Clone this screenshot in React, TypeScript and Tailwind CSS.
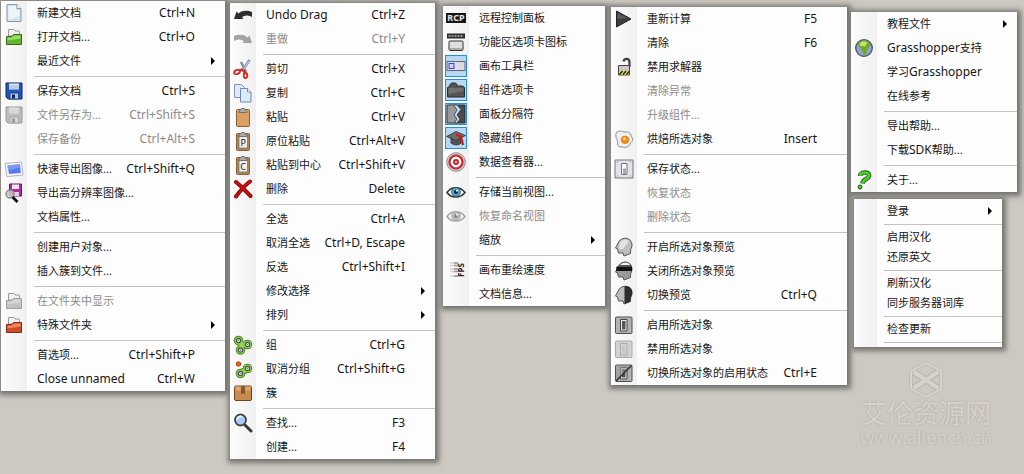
import { Fragment } from 'react';
import type { ReactNode } from 'react';
import clsx from 'clsx';

interface Item {
  label: string;
  keys?: string;
  icon?: ReactNode;
  disabled?: boolean;
  checked?: boolean;
  submenu?: boolean;
}

type Group = Item[];

/* ---------- icons ---------- */

function Icon({ children }: { children: ReactNode }) {
  return (
    <svg viewBox="0 0 20 20" className="size-5 shrink-0" fill="none" aria-hidden="true">
      {children}
    </svg>
  );
}

const NewIcon = () => (
  <Icon>
    <path d="M3 1.500h10l4 4v13H3z" fill="#d3e4f0" stroke="#8597ab" />
    <path d="M4.500 3h7.500v4h3.500v6L4.500 17z" fill="#edf5fa" />
    <path d="M13 1.500v4h4" fill="#fff" stroke="#8597ab" />
  </Icon>
);

const FolderIcon = ({ fill, light, stroke }: { fill: string; light: string; stroke: string }) => (
  <Icon>
    <path d="M4.500 9V2.500h5.500l1 1.500h4.500V9z" fill="#f1f1f1" stroke="#999" />
    <path d="M2.500 9.500h5l2-2h8v10h-15z" fill={fill} stroke={stroke} />
    <path d="M3.500 10.500h4.500l2-2h6.500v3l-13 2z" fill={light} />
  </Icon>
);

const SaveIcon = ({ body, edge, label }: { body: string; edge: string; label: string }) => (
  <Icon>
    <path d="M2 2h16v16H4l-2-2z" fill={body} stroke={edge} />
    <path d="M5 2.500h10v6H5z" fill={label} />
    <path d="M5 5h10M5 7h10" stroke={edge} strokeOpacity=".3" />
    <path d="M6 12h8.500v6H6z" fill={label} fillOpacity=".75" stroke={edge} strokeWidth=".7" />
    <path d="M8 13.500h3v4H8z" fill={edge} />
  </Icon>
);

const ImageIcon = () => (
  <Icon>
    <path d="M1 4.500 17.500 3l1.500 13-16 1.500z" fill="#fafafa" stroke="#b4b4bc" strokeLinejoin="round" />
    <path d="m3.500 6.500 12.500-1.200.8 8.700L5 15z" fill="#547bf0" />
    <path d="m3.500 6.500 12.500-1.200.2 3-12.200 3z" fill="#7b9af8" />
  </Icon>
);

const HiResIcon = () => (
  <Icon>
    <path d="M5.500 1h12v12h-11l-1-1z" fill="#a3319f" stroke="#6a1769" />
    <path d="M8 1.500h7V6H8z" fill="#f6e4f5" />
    <path d="M9 9h6v4H9z" fill="#e6cbe6" />
    <circle cx="6" cy="11" r="4" fill="#c9c9c9" fillOpacity=".85" stroke="#888" strokeWidth="1.400" />
    <path d="m8.500 14 5 5" stroke="#111" strokeWidth="2.800" />
  </Icon>
);

const UndoIcon = () => (
  <Icon>
    <path d="M1 14 3.500 6.500l2 2C9 5 15 5.500 19 7v5c-4-2-7-2-10 0l1.500 2z" fill="#2e2e2e" />
  </Icon>
);

const RedoIcon = () => (
  <Icon>
    <path d="m19 14-2.500-7.500-2 2C11 5 5 5.500 1 7v5c4-2 7-2 10 0l-1.500 2z" fill="#a3a3a3" />
  </Icon>
);

const CutIcon = () => (
  <Icon>
    <path d="M16.500 1 9 12.500M8 3l5 10" stroke="#7f8fa8" strokeWidth="2.600" />
    <path d="M16 2 9.500 12" stroke="#d4dce8" />
    <path d="m10 10-4 2M10.500 11l2 4" stroke="#c9281c" strokeWidth="2.500" />
    <ellipse cx="4" cy="13" rx="3" ry="2" transform="rotate(-25 4 13)" stroke="#d22a1e" strokeWidth="1.800" />
    <ellipse cx="12.500" cy="16.500" rx="1.800" ry="2.500" stroke="#d22a1e" strokeWidth="1.800" />
  </Icon>
);

const CopyIcon = () => (
  <Icon>
    <path d="M1.500 1.500h7l3 3v10h-10z" fill="#dfeaf4" stroke="#8095b2" />
    <path d="M7.500 5.500h7l3.500 3.500v10H7.500z" fill="#dceaf5" stroke="#7189a8" />
    <path d="M14.500 5.500V9H18" fill="#fff" stroke="#7189a8" />
  </Icon>
);

const PasteIcon = ({ letter }: { letter?: string }) => (
  <Icon>
    <rect x="3.500" y="2.500" width="13" height="17" rx="1" fill={letter ? '#b08454' : '#d9a05f'} stroke="#8a6135" />
    {letter && <path d="M6 5h8.500v12H6z" fill="#eee" stroke="#777" strokeWidth=".8" />}
    <path d="M6 5.500c0-3 2-2 2.500-4h3c.5 2 2.500 1 2.500 4z" fill="#aaa" stroke="#666" strokeWidth=".8" />
    {letter && (
      <text x="10.200" y="14.500" textAnchor="middle" fontSize="9" fill="#222">
        {letter}
      </text>
    )}
  </Icon>
);

const DeleteIcon = () => (
  <Icon>
    <path d="M3 3c5 4 9 8.500 14.500 14M17 2.500C11 7 7 12 3 17.500" stroke="#7c0404" strokeWidth="4" strokeLinecap="round" />
    <path d="M3 3c5 4 9 8.500 14.500 14M17 2.500C11 7 7 12 3 17.500" stroke="#c80f0f" strokeWidth="2.400" strokeLinecap="round" />
  </Icon>
);

const Ring = ({ x, y }: { x: number; y: number }) => (
  <>
    <circle cx={x} cy={y} r="2.200" fill="#eee" stroke="#4c4c55" strokeWidth="1.200" />
    <circle cx={x} cy={y} r=".8" fill="#777" />
  </>
);

// zero-length segments give the round lobes, the others the necks between them
const GroupIcon = () => (
  <Icon>
    <g strokeLinecap="round">
      <path d="M5.500 5.500h0M14.500 9.500h0M7.500 15h0" stroke="#4b8a1c" strokeWidth="9.600" />
      <path d="M5.500 5.500 9 10l5.500-.5M9 10l-1.500 5" stroke="#4b8a1c" strokeWidth="6.500" />
      <path d="M5.500 5.500h0M14.500 9.500h0M7.500 15h0" stroke="#8fd84c" strokeWidth="7.600" />
      <path d="M5.500 5.500 9 10l5.500-.5M9 10l-1.500 5" stroke="#8fd84c" strokeWidth="4.500" />
    </g>
    <Ring x={5.5} y={5.5} />
    <Ring x={14.5} y={9.5} />
    <Ring x={7.5} y={15} />
  </Icon>
);

const UngroupIcon = () => (
  <Icon>
    <g strokeLinecap="round">
      <path d="M14.500 9.500h0M7.500 14.500h0" stroke="#4b8a1c" strokeWidth="9.600" />
      <path d="m7.500 14.500 7-5" stroke="#4b8a1c" strokeWidth="6.500" />
      <path d="M14.500 9.500h0M7.500 14.500h0" stroke="#8fd84c" strokeWidth="7.600" />
      <path d="m7.500 14.500 7-5" stroke="#8fd84c" strokeWidth="4.500" />
    </g>
    <Ring x={14.5} y={9.5} />
    <Ring x={7.5} y={14.5} />
    <circle cx="5.500" cy="5" r="2.200" fill="#f2641d" stroke="#b03a0c" />
  </Icon>
);

const ClusterIcon = () => (
  <Icon>
    <rect x="1.500" y="3" width="17" height="14.500" rx="1.500" fill="#c98c50" stroke="#6e4520" />
    <path d="M2.500 3.500h15v4h-15z" fill="#dba76e" />
    <path d="M8 3h4v8.500l-2-1.500-2 1.500z" fill="#8c5426" />
  </Icon>
);

const FindIcon = () => (
  <Icon>
    <path d="m12 12 6 6" stroke="#3a3a3a" strokeWidth="3" strokeLinecap="round" />
    <circle cx="7.500" cy="7" r="5.500" fill="#a9cdf1" stroke="#444" strokeWidth="1.800" />
    <path d="M4 7a3.500 3.500 0 0 1 5-3.200" stroke="#e9f5ff" strokeWidth="1.600" />
  </Icon>
);

const RcpIcon = () => (
  <Icon>
    <rect x="0" y="5" width="20" height="10" fill="#151515" />
    <text x="10" y="13.300" textAnchor="middle" fontSize="9" fontWeight="700" fill="#e4e4e4">
      RCP
    </text>
  </Icon>
);

const RibbonIcon = () => (
  <Icon>
    <path d="M1 1.500h18v5H1z" fill="#2c2c2c" />
    <path d="M2.500 4h15" stroke="#b5b5b5" strokeWidth="1.500" strokeDasharray="2 1" />
    <rect x="3" y="9" width="14" height="9.500" rx="1" fill="#dedede" stroke="#333" />
    <path d="M4 17h12.500" stroke="#777" />
  </Icon>
);

const ToolbarIcon = () => (
  <Icon>
    <rect x="1" y="5.500" width="18" height="9" fill="#e0e0e4" stroke="#64646c" />
    <rect x="3" y="7.500" width="5" height="5" fill="#c8d0ff" stroke="#3a4bd2" />
    <path d="M14 6v8M16.500 6v8" stroke="#cfcfd4" />
  </Icon>
);

const TabsIcon = () => (
  <Icon>
    <path d="M1.500 7.500 4 6V4.500L5.500 3h4L11 4.500V6h5.500l2 1.500V17h-17z" fill="#555" stroke="#2a2a2a" />
    <path d="M2.500 8h15v3l-15 3z" fill="#707070" />
  </Icon>
);

const DividerIcon = () => (
  <Icon>
    <path d="M1 1h18v18H1z" fill="#4a4a4a" stroke="#2b2b2b" />
    <path d="M1.500 1.500H8l3 5-3 5 3 4-3 3H1.500z" fill="#9a9a9a" />
    <path d="M7.500 1 11 6l-3 5 3 4-2.500 4h2.500l3-4-3-4 4-5.500L11 1z" fill="#b6dcf8" stroke="#333" strokeWidth=".7" />
  </Icon>
);

const CapIcon = () => (
  <Icon>
    <path d="M5 9v6c3 2.500 8 2.500 10 0V9z" fill="#555" stroke="#2d2d2d" strokeWidth=".8" />
    <path d="m.5 8.500 9.500-5 9.500 4-9.500 5z" fill="#6b6b6b" stroke="#333" strokeWidth=".8" />
    <path d="M10 7c3 0 5 1 5.500 3.500L17 17" stroke="#d8161b" strokeWidth="2.200" />
  </Icon>
);

const TargetIcon = () => (
  <Icon>
    <circle cx="10" cy="10" r="9.300" fill="#ccc" stroke="#777" strokeWidth=".8" />
    <circle cx="10" cy="10" r="6.500" fill="#fff" stroke="#d0222a" strokeWidth="2.200" />
    <circle cx="10" cy="10" r="3" fill="#d0222a" />
    <circle cx="10" cy="10" r=".9" fill="#fff" />
  </Icon>
);

const EyeIcon = ({ iris, line, pupil }: { iris: string; line: string; pupil: string }) => (
  <Icon>
    <path d="M1 10.500C5 4 14.500 4 19 10.500 14.500 16.500 5 16.500 1 10.500z" fill="#f4f4f4" stroke={line} strokeWidth="1.500" />
    <circle cx="10" cy="10" r="4.500" fill={iris} stroke={line} strokeWidth=".6" />
    <circle cx="10" cy="10" r="2" fill={pupil} />
    <circle cx="11" cy="8.800" r="1" fill="#fff" />
  </Icon>
);

const FpsIcon = () => (
  <Icon>
    <path d="M4 3h7M4 5.500h7M4 9h7M4 11.500h7M4 16h7" stroke="#d2d2d2" strokeWidth="1.600" />
    <path d="M8 3h4M8 5.500h4M8 9h4M8 11.500h4M8 16h4" stroke="#999" strokeWidth="1.600" />
    <text x="0" y="0" transform="translate(18 10) rotate(-90)" textAnchor="middle" fontSize="8" fontWeight="700" fill="#222">
      FPS
    </text>
  </Icon>
);

const PlayIcon = () => (
  <Icon>
    <path d="M2.500 2 17 10 2.500 18z" fill="#3d3d3d" stroke="#222" strokeLinejoin="round" />
    <path d="M3.500 4 14 9.500H3.500z" fill="#5b5b5b" />
  </Icon>
);

const LockIcon = () => (
  <Icon>
    <path d="M9.500 4.500C10 1 15.500 1 15.500 5v5" stroke="#444" strokeWidth="2.300" />
    <path d="M4.500 8.500h11v9.500h-11z" fill="#c9c9c9" stroke="#444" />
    <path d="M5 14h10v3.500H5z" fill="#f1da1b" />
    <path d="m5.500 17.500 3-3.500M9 17.500l3-3.500M12.500 17.500l2.500-3" stroke="#222" strokeWidth="1.400" />
  </Icon>
);

const EggIcon = () => (
  <Icon>
    <path d="M3 3c4-2 5-.5 8 0 4-.5 6 1 6 4 2.500 3 2 5-.5 7-1 4-5 5-8 4-4 .5-6-2-4.500-5C2.500 10 .5 6 3 3z" fill="#efefef" stroke="#8f8f8f" />
    <circle cx="11" cy="10.800" r="3.800" fill="#f58a12" stroke="#d4700a" strokeWidth=".6" />
    <circle cx="10.500" cy="9.700" r="1.500" fill="#ffe08a" />
  </Icon>
);

const StateIcon = () => (
  <Icon>
    <path d="M1 1h18v18H1z" fill="#e2e2ea" stroke="#77777c" />
    <path d="M7.500 4.500h5.500v11H7.500z" fill="#fafafa" stroke="#777" />
    <path d="M9 9.500h3v5.500H9z" fill="#aaa" />
    <path d="M3 3h1M16 3h1M3 17h1M16 17h1" stroke="#888" />
  </Icon>
);

const headPath = 'M5 4.500C8-.5 18 0 18 8c0 3-1.500 4-1.500 6v2.500L10 19l-1-3H4.500L3.500 12 1.500 11z';

const HeadIcon = ({ variant }: { variant: 'on' | 'off' | 'split' }) => (
  <Icon>
    <path d={headPath} fill={variant === 'off' ? '#9a9a9a' : '#bdbdbd'} stroke="#555" />
    {variant === 'on' && <path d="M6 5.500C8 2 13 1.500 15 4.500L9 12H5z" fill="#e2e2e2" />}
    {variant === 'off' && (
      <>
        <path d="M5 4.500C8 0 15 0 17 4.500z" fill="#f4f4f4" stroke="#555" />
        <path d="M2.500 5.500H18V10H2z" fill="#111" />
      </>
    )}
    {variant === 'split' && <path d="M10.500 1C18 1 19 6 18 9.500c-1 2-1.500 3-1.500 7L10.500 19z" fill="#2d2d2d" />}
  </Icon>
);

const SwitchIcon = ({ variant }: { variant: 'on' | 'off' | 'toggle' }) => {
  const dim = variant === 'off';
  return (
    <Icon>
      <rect x="1.500" y="2" width="16.500" height="16.500" rx="1" fill={dim ? '#d2d2d2' : '#b2b2b2'} stroke={dim ? '#aaa' : '#505050'} />
      <path d="M6.500 4.500H13V16H6.500z" fill={dim ? '#d9d9d9' : '#ededed'} stroke={dim ? '#aaa' : '#444'} />
      <path d="M8 6h3.500v8.500H8z" fill={dim ? '#c7c7c7' : '#555'} />
      {variant === 'toggle' && (
        <>
          <path d="M2 18V2.500h15.500z" fill="#999" fillOpacity=".6" />
          <path d="M2 18 17.500 2.500" stroke="#333" strokeWidth="1.600" />
        </>
      )}
    </Icon>
  );
};

const GlobeIcon = () => (
  <Icon>
    <circle cx="10" cy="10" r="8.300" fill="#8fa8c8" stroke="#3b4a70" strokeWidth="1.200" />
    <path d="M3.500 5.500c3-3.500 8.500-4 12-1l1.500 3-2 1.500-2 3-.5 3-2.500 3-1.500-4.500-2-3z" fill="#6fa823" />
    <path d="M5.500 5c2-2 6-2 8-.5L11 8.500 6.500 8z" fill="#c5e06b" />
  </Icon>
);

const HelpIcon = () => (
  <Icon>
    <path d="M6 6c0-4 9-5 9-.5 0 4-6 3-6.500 8" stroke="#1c5a10" strokeWidth="4.600" />
    <path d="M6 6c0-4 9-5 9-.5 0 4-6 3-6.500 8" stroke="#4fcf2b" strokeWidth="2.800" />
    <circle cx="6" cy="17" r="2" fill="#4fcf2b" stroke="#1c5a10" />
  </Icon>
);

/* ---------- menu data ---------- */

const fileMenu: Group[] = [
  [
    { label: '新建文档', keys: 'Ctrl+N', icon: <NewIcon /> },
    { label: '打开文档...', keys: 'Ctrl+O', icon: <FolderIcon fill="#66b52e" light="#98dc62" stroke="#35691a" /> },
    { label: '最近文件', submenu: true },
  ],
  [
    { label: '保存文档', keys: 'Ctrl+S', icon: <SaveIcon body="#1f57c0" edge="#10285c" label="#dce9f8" /> },
    { label: '文件另存为...', keys: 'Ctrl+Shift+S', disabled: true, icon: <SaveIcon body="#bdbdbd" edge="#969696" label="#e3e3e3" /> },
    { label: '保存备份', keys: 'Ctrl+Alt+S', disabled: true },
  ],
  [
    { label: '快速导出图像...', keys: 'Ctrl+Shift+Q', icon: <ImageIcon /> },
    { label: '导出高分辨率图像...', icon: <HiResIcon /> },
    { label: '文档属性...' },
  ],
  [{ label: '创建用户对象...' }, { label: '插入簇到文件...' }],
  [
    { label: '在文件夹中显示', disabled: true, icon: <FolderIcon fill="#c1c1c1" light="#d6d6d6" stroke="#a0a0a0" /> },
    { label: '特殊文件夹', submenu: true, icon: <FolderIcon fill="#d04a22" light="#ee8a62" stroke="#852a10" /> },
  ],
  [
    { label: '首选项...', keys: 'Ctrl+Shift+P' },
    { label: 'Close unnamed', keys: 'Ctrl+W' },
  ],
];

const editMenu: Group[] = [
  [
    { label: 'Undo Drag', keys: 'Ctrl+Z', icon: <UndoIcon /> },
    { label: '重做', keys: 'Ctrl+Y', disabled: true, icon: <RedoIcon /> },
  ],
  [
    { label: '剪切', keys: 'Ctrl+X', icon: <CutIcon /> },
    { label: '复制', keys: 'Ctrl+C', icon: <CopyIcon /> },
    { label: '粘贴', keys: 'Ctrl+V', icon: <PasteIcon /> },
    { label: '原位粘贴', keys: 'Ctrl+Alt+V', icon: <PasteIcon letter="P" /> },
    { label: '粘贴到中心', keys: 'Ctrl+Shift+V', icon: <PasteIcon letter="C" /> },
    { label: '删除', keys: 'Delete', icon: <DeleteIcon /> },
  ],
  [
    { label: '全选', keys: 'Ctrl+A' },
    { label: '取消全选', keys: 'Ctrl+D, Escape' },
    { label: '反选', keys: 'Ctrl+Shift+I' },
    { label: '修改选择', submenu: true },
    { label: '排列', submenu: true },
  ],
  [
    { label: '组', keys: 'Ctrl+G', icon: <GroupIcon /> },
    { label: '取消分组', keys: 'Ctrl+Shift+G', icon: <UngroupIcon /> },
    { label: '簇', icon: <ClusterIcon /> },
  ],
  [
    { label: '查找...', keys: 'F3', icon: <FindIcon /> },
    { label: '创建...', keys: 'F4' },
  ],
];

const viewMenu: Group[] = [
  [
    { label: '远程控制面板', icon: <RcpIcon /> },
    { label: '功能区选项卡图标', icon: <RibbonIcon /> },
    { label: '画布工具栏', checked: true, icon: <ToolbarIcon /> },
    { label: '组件选项卡', checked: true, icon: <TabsIcon /> },
    { label: '面板分隔符', checked: true, icon: <DividerIcon /> },
    { label: '隐藏组件', checked: true, icon: <CapIcon /> },
    { label: '数据查看器...', icon: <TargetIcon /> },
  ],
  [
    { label: '存储当前视图...', icon: <EyeIcon iris="#4fa9d8" line="#333" pupil="#123" /> },
    { label: '恢复命名视图', disabled: true, icon: <EyeIcon iris="#bbb" line="#a5a5a5" pupil="#8a8a8a" /> },
    { label: '缩放', submenu: true },
  ],
  [{ label: '画布重绘速度', icon: <FpsIcon /> }, { label: '文档信息...' }],
];

const solutionMenu: Group[] = [
  [
    { label: '重新计算', keys: 'F5', icon: <PlayIcon /> },
    { label: '清除', keys: 'F6' },
    { label: '禁用求解器', icon: <LockIcon /> },
    { label: '清除异常', disabled: true },
    { label: '升级组件...', disabled: true },
    { label: '烘焙所选对象', keys: 'Insert', icon: <EggIcon /> },
  ],
  [
    { label: '保存状态...', icon: <StateIcon /> },
    { label: '恢复状态', disabled: true },
    { label: '删除状态', disabled: true },
  ],
  [
    { label: '开启所选对象预览', icon: <HeadIcon variant="on" /> },
    { label: '关闭所选对象预览', icon: <HeadIcon variant="off" /> },
    { label: '切换预览', keys: 'Ctrl+Q', icon: <HeadIcon variant="split" /> },
  ],
  [
    { label: '启用所选对象', icon: <SwitchIcon variant="on" /> },
    { label: '禁用所选对象', icon: <SwitchIcon variant="off" /> },
    { label: '切换所选对象的启用状态', keys: 'Ctrl+E', icon: <SwitchIcon variant="toggle" /> },
  ],
];

const helpMenu: Group[] = [
  [
    { label: '教程文件', submenu: true },
    { label: 'Grasshopper支持', icon: <GlobeIcon /> },
    { label: '学习Grasshopper' },
    { label: '在线参考' },
  ],
  [{ label: '导出帮助...' }, { label: '下载SDK帮助...' }],
  [{ label: '关于...', icon: <HelpIcon /> }],
];

const localeMenu: Group[] = [
  [{ label: '登录', submenu: true }],
  [{ label: '启用汉化' }, { label: '还原英文' }],
  [{ label: '刷新汉化' }, { label: '同步服务器词库' }],
  [{ label: '检查更新' }],
];

/* ---------- menu ---------- */

// Latin runs are set one size up so they sit level with the Chinese glyphs
function Label({ text }: { text: string }) {
  return (
    <span className="pl-2.5 text-[11px] whitespace-nowrap">
      {text.split(/([A-Za-z][A-Za-z ]*)/).map((part, i) =>
        i % 2 ? <span key={i} className="text-xs leading-none">{part}</span> : part
      )}
    </span>
  );
}

function MenuItem({ item, compact }: { item: Item; compact?: boolean }) {
  return (
    <li role="none">
      <button
        role={item.checked ? 'menuitemcheckbox' : 'menuitem'}
        aria-checked={item.checked}
        aria-haspopup={item.submenu ? 'menu' : undefined}
        disabled={item.disabled}
        className={clsx(
          'flex w-full items-center text-left',
          compact ? 'h-5' : 'h-6',
          item.disabled ? 'text-[#8b8b8b]' : 'text-[#161616]'
        )}
      >
        <span
          className={clsx(
            'ml-0.5 flex h-[22px] shrink-0 items-center justify-center',
            compact ? 'w-[19px]' : 'w-[22px]',
            item.checked && 'bg-[#b8d9f3] ring-1 ring-inset ring-[#2a8ddb]'
          )}
        >
          {item.icon}
        </span>
        <span className="flex flex-1 items-center justify-between pr-[30px] pl-0.5">
          <Label text={item.label} />
          {item.keys && <span className="text-xs whitespace-nowrap">{item.keys}</span>}
        </span>
        {item.submenu && (
          <svg viewBox="0 0 4 8" className="mr-2.5 -ml-3.5 h-2 w-1 shrink-0" aria-hidden="true">
            <path d="M0 0v8l4-4z" fill="#000" />
          </svg>
        )}
      </button>
    </li>
  );
}

function Separator({ compact }: { compact?: boolean }) {
  return (
    <li role="separator" className={clsx('flex h-1.5 items-center', compact ? 'pl-[30px]' : 'pl-[33px]')}>
      <span className="h-px w-full bg-[#c3c3c3]" />
    </li>
  );
}

interface MenuProps {
  name: string;
  groups: Group[];
  compact?: boolean;
  className?: string;
}

// The shadow sits on a layer below every menu so it never darkens a neighbour
function Menu({ name, groups, compact, className }: MenuProps) {
  return (
    <ul
      role="menu"
      aria-label={name}
      className={clsx(
        'relative before:absolute before:inset-0 before:-z-10 before:shadow-[1px_1px_5px_3px_#747470] before:content-[""]',
        compact
          ? 'bg-[linear-gradient(to_right,#fcfcfc_0,#f0f0f0_23px,#fdfdfd_23px)] py-0.5'
          : 'bg-[linear-gradient(to_right,#fcfcfc_0,#f0f0f0_26px,#fdfdfd_26px)]',
        className
      )}
    >
      {groups.map((group, i) => (
        <Fragment key={i}>
          {i > 0 && <Separator compact={compact} />}
          {group.map((item) => (
            <MenuItem key={item.label} item={item} compact={compact} />
          ))}
        </Fragment>
      ))}
      {compact && <Separator compact />}
    </ul>
  );
}

function Watermark() {
  return (
    <div className="mt-3.5 flex flex-col items-center pr-4 text-[#d6d2cc] [text-shadow:0_0_2px_#a9a49c]">
      <svg viewBox="0 0 34 38" className="h-[38px] w-[34px]" fill="none" aria-hidden="true">
        <path d="M17 2 32 10v18L17 36 2 28V10z" stroke="#bab5ae" strokeWidth="3.500" strokeLinejoin="round" />
        <path d="m5 11 24 16M29 11 5 27" stroke="#bab5ae" strokeWidth="6.500" />
        <path d="m5 11 24 16M29 11 5 27" stroke="#d6d2cc" strokeWidth="4.500" />
        <path d="M17 2 32 10v18L17 36 2 28V10z" stroke="#d6d2cc" strokeWidth="2" strokeLinejoin="round" />
      </svg>
      <p className="text-[26px] leading-7">艾伦资源网</p>
      <p className="text-lg leading-5">www.allencn.cn</p>
    </div>
  );
}

export default function App() {
  return (
    <main className="isolate flex min-h-screen items-start overflow-hidden bg-[#cdc8c1] pr-[7px] font-['Noto_Sans','Noto_Sans_CJK_SC',sans-serif]">
      <Menu name="文件" groups={fileMenu} className="mt-px ml-px flex-[224]" />
      <Menu name="编辑" groups={editMenu} className="mt-[3px] ml-[5px] flex-[205]" />
      <Menu name="视图" groups={viewMenu} className="mt-1.5 ml-2 flex-[162]" />
      <Menu name="运算" groups={solutionMenu} className="mt-[7px] ml-1.5 flex-[236]" />
      <div className="mt-3 ml-1 flex-[166]">
        <Menu name="帮助" groups={helpMenu} />
        <Menu name="汉化" groups={localeMenu} compact className="mt-[7px] mr-[15px] ml-[3px]" />
        <Watermark />
      </div>
    </main>
  );
}
